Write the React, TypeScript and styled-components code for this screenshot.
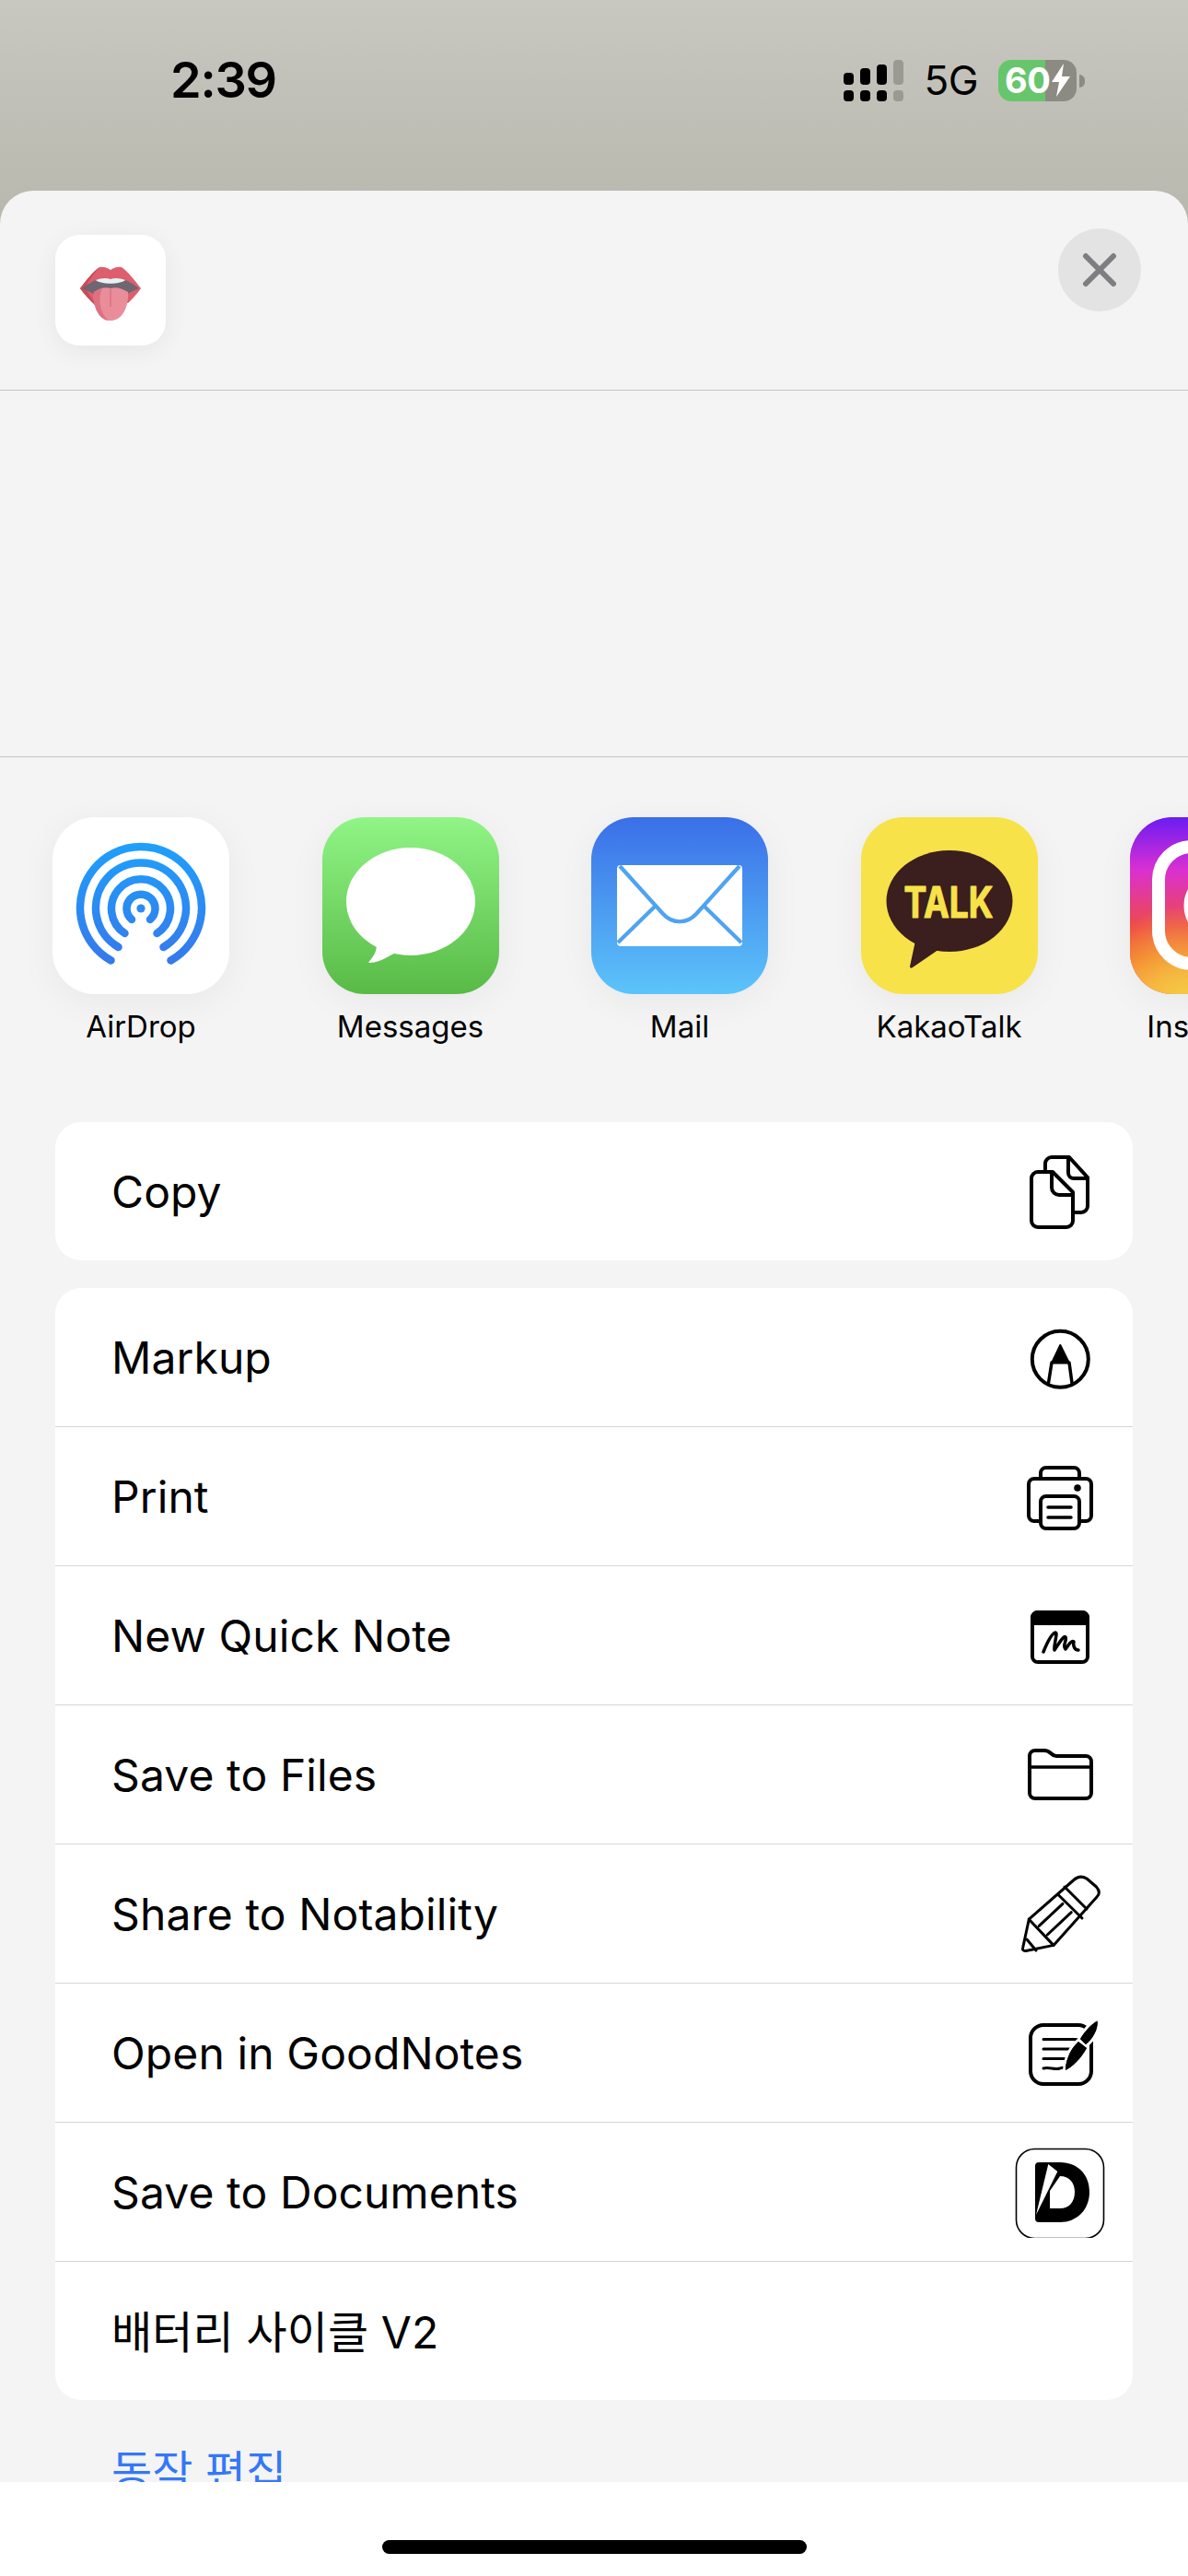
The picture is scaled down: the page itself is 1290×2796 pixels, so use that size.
import React from "react";
import styled, { createGlobalStyle } from "styled-components";

const GlobalStyle = createGlobalStyle`
  html, body {
    margin: 0;
    padding: 0;
    background: #fff;
  }
  * {
    box-sizing: border-box;
  }
`;

const FONT = `Inter, "Noto Sans CJK KR", "Liberation Sans", sans-serif`;

const Screen = styled.div`
  width: 1290px;
  height: 2796px;
  display: flex;
  flex-direction: column;
  overflow: hidden;
  font-family: ${FONT};
  color: #000;
  background: linear-gradient(180deg, #c8c7c0 0, #b8b8ae 240px);
`;

const StatusBar = styled.div`
  height: 207px;
  flex-shrink: 0;
  display: flex;
  justify-content: space-between;
  align-items: flex-start;
  padding: 60px 121px 0 185px;
`;
const Time = styled.div`
  font-size: 54px;
  line-height: 54px;
  font-weight: 600;
  letter-spacing: -1.2px;
`;
const StatusIcons = styled.div`
  display: flex;
  align-items: center;
  gap: 22px;
  height: 54px;
`;
const NetworkLabel = styled.div`
  font-size: 44px;
  line-height: 54px;
  font-weight: 400;
  letter-spacing: -0.5px;
`;
const Battery = styled.div`
  position: relative;
  width: 85px;
  height: 45px;
  border-radius: 14px;
  background: linear-gradient(90deg, #67c66b 60%, #8b8b84 60%);
  display: flex;
  align-items: center;
  padding-left: 7px;
  color: #fff;
  font-size: 38px;
  font-weight: 700;
  letter-spacing: -0.5px;
  &::after {
    content: "";
    position: absolute;
    right: -9px;
    top: 16px;
    width: 6px;
    height: 14px;
    border-radius: 0 7px 7px 0;
    background: #8b8b84;
  }
`;

const Sheet = styled.div`
  flex: 1;
  min-height: 0;
  overflow: hidden;
  background: #f4f4f4;
  border-radius: 36px 36px 0 0;
`;
const SheetHeader = styled.div`
  height: 217px;
  display: flex;
  justify-content: space-between;
  align-items: flex-start;
  padding: 0 51px 0 60px;
  border-bottom: 1px solid #c6c6c6;
`;
const Thumb = styled.div`
  width: 120px;
  height: 120px;
  margin-top: 48px;
  border-radius: 26px;
  background: #fff;
  box-shadow: 0 6px 28px rgba(0, 0, 0, 0.06);
`;
const CloseButton = styled.div`
  width: 90px;
  height: 90px;
  margin-top: 41px;
  border-radius: 50%;
  background: #e3e3e4;
  display: flex;
  align-items: center;
  justify-content: center;
`;
const PreviewArea = styled.div`
  height: 398px;
  border-bottom: 1px solid #c6c6c6;
`;
const AppsRow = styled.div`
  height: 396px;
  display: flex;
  gap: 100.5px;
  padding: 65px 0 0 57px;
  overflow: hidden;
`;
const AppItem = styled.div`
  width: 192px;
  flex-shrink: 0;
  display: flex;
  flex-direction: column;
  align-items: center;
`;
const AppIcon = styled.div<{ $bg: string }>`
  width: 192px;
  height: 192px;
  border-radius: 46px;
  overflow: hidden;
  background: ${(props) => props.$bg};
  box-shadow: 0 8px 40px rgba(0, 0, 0, 0.05);
`;
const AppLabel = styled.div`
  margin-top: 15px;
  font-size: 33px;
  line-height: 40px;
  white-space: nowrap;
`;
const Lists = styled.div`
  display: flex;
  flex-direction: column;
  gap: 30px;
  padding: 0 60px;
`;
const Card = styled.div`
  background: #fff;
  border-radius: 28px;
  overflow: hidden;
`;
const Row = styled.div`
  height: 151px;
  display: flex;
  align-items: center;
  justify-content: space-between;
  padding: 0 29px 0 61px;
  font-size: 48px;
  letter-spacing: 0.1px;
  & + & {
    border-top: 1px solid #d6d6d6;
  }
  &:first-child {
    height: 150px;
  }
  &:last-child:not(:first-child) {
    padding-bottom: 5px;
  }
`;
const EditActions = styled.div`
  margin: 50px 0 0 121px;
  font-size: 48px;
  line-height: 56px;
  color: #3478f6;
`;
const HomeArea = styled.div`
  height: 102px;
  flex-shrink: 0;
  background: #fff;
  display: flex;
  justify-content: center;
  padding-top: 63px;
`;
const HomeBar = styled.div`
  width: 461px;
  height: 15px;
  border-radius: 8px;
  background: #000;
`;
const RowIcon = styled.svg<{ $stroke?: number }>`
  width: 100px;
  height: 100px;
  flex-shrink: 0;
  fill: none;
  stroke: #000;
  stroke-width: ${(props) => props.$stroke ?? 4};
  stroke-linecap: round;
  stroke-linejoin: round;
`;
const IconArt = styled.svg`
  display: block;
  width: 100%;
  height: 100%;
`;

function SignalIcon() {
  return (
    <svg width="65" height="45" viewBox="0 0 65 45">
      <rect x="0" y="14" width="11" height="13" rx="4" />
      <rect x="18" y="9" width="11" height="18" rx="4" />
      <rect x="36" y="5" width="11" height="22" rx="4" />
      <rect x="54" y="0" width="11" height="27" rx="4" fill="#9a9a92" />
      <rect x="0" y="33" width="11" height="12" rx="4" />
      <rect x="18" y="33" width="11" height="12" rx="4" />
      <rect x="36" y="33" width="11" height="12" rx="4" />
      <rect x="54" y="33" width="11" height="12" rx="4" fill="#9a9a92" />
    </svg>
  );
}

function TongueArt() {
  return (
    <IconArt viewBox="0 0 120 120">
      <path d="M27 58 C33 50 41 40 48 35 C53 34 57 36 60 38 C63 36 67 34 72 35 C79 40 87 50 93 58 C89 64 83 70 79 74 L43 76 C37 70 31 64 27 58 Z" fill="#dd5f6d" />
      <path d="M27 58 C33 50 41 40 48 35 C42 42 36 50 33 57 C36 64 40 70 45 76 L43 76 C37 70 31 64 27 58 Z" fill="#c84b58" />
      <path d="M29 58 C38 52 42 49 46 49 C52 51 68 51 74 49 C79 49 84 53 91 58 C86 60 82 62 78 64 L42 64 C38 62 34 60 29 58 Z" fill="#6e6670" />
      <path d="M44 49 C49 47 55 46 60 48 C65 46 71 47 76 49 C70 54 50 54 44 49 Z" fill="#e6f2f5" />
      <path d="M42 62 C48 58 54 56 60 58 C66 56 72 58 79 62 C80 72 76 93 60 93 C46 93 40 74 42 62 Z" fill="#ea8d9a" />
      <path d="M42 62 C45 60 48 59 51 58 C47 66 47 84 58 93 C46 92 40 74 42 62 Z" fill="#dc7181" />
      <path d="M60 59 V78" stroke="#d8707f" strokeWidth="1.5" fill="none" />
    </IconArt>
  );
}

function AirDropArt() {
  return (
    <IconArt viewBox="0 0 192 192">
      <defs>
        <linearGradient id="airdropBlue" gradientUnits="userSpaceOnUse" x1="0" y1="29" x2="0" y2="160">
          <stop offset="0" stopColor="#1ea0fb" />
          <stop offset="1" stopColor="#3678ec" />
        </linearGradient>
      </defs>
      <path
        d="M63.5 155.5 A66 66 0 1 1 128.5 155.5 M71.5 141 A49 49 0 1 1 120.5 141 M78.5 126 A32 32 0 1 1 113.5 126 M86 111 A15.5 15.5 0 1 1 106 111"
        fill="none"
        stroke="url(#airdropBlue)"
        strokeWidth="8.5"
        strokeLinecap="round"
      />
      <circle cx="96" cy="99" r="4.6" fill="#2a8bf3" />
    </IconArt>
  );
}

function MessagesArt() {
  return (
    <IconArt viewBox="0 0 192 192">
      <ellipse cx="96" cy="91.5" rx="70" ry="58.5" fill="#fff" />
      <path d="M50 158 C54 152 61 146 58 136 L82 146 C72 150 64 158 50 158 Z" fill="#fff" />
    </IconArt>
  );
}

function MailArt() {
  return (
    <IconArt viewBox="0 0 192 192">
      <rect x="28" y="52" width="136" height="88" rx="4" fill="#fff" />
      <path
        d="M31 53 L78 105 C88 116 104 116 114 105 L161 53 M29 136 L70 96 M163 136 L122 96"
        fill="none"
        stroke="#4ea3f2"
        strokeWidth="4.2"
      />
    </IconArt>
  );
}

function KakaoArt() {
  return (
    <IconArt viewBox="0 0 192 192">
      <ellipse cx="96" cy="91" rx="68.5" ry="55" fill="#3b1e1e" />
      <path d="M59 134 L53 162 C53 164 55 164 56 163 L85 143 Z" fill="#3b1e1e" />
      <text
        x="95"
        y="108.5"
        textAnchor="middle"
        textLength="97"
        lengthAdjust="spacingAndGlyphs"
        fontFamily="Inter, sans-serif"
        fontWeight="700"
        fontSize="46"
        fill="#f7e24a"
        stroke="#f7e24a"
        strokeWidth="1.2"
        strokeLinejoin="round"
      >
        TALK
      </text>
    </IconArt>
  );
}

function InstagramArt() {
  return (
    <IconArt viewBox="0 0 192 192">
      <defs>
        <linearGradient id="instaBase" x1="0" y1="0" x2="0" y2="1">
          <stop offset="0" stopColor="#6a1cf2" />
          <stop offset="0.3" stopColor="#da30d2" />
          <stop offset="0.62" stopColor="#ee4a48" />
          <stop offset="0.8" stopColor="#f26e2a" />
          <stop offset="1" stopColor="#f5a53a" />
        </linearGradient>
        <radialGradient id="instaGlow" cx="0.3" cy="1" r="0.5">
          <stop offset="0" stopColor="#f6c844" />
          <stop offset="1" stopColor="#f6c844" stopOpacity="0" />
        </radialGradient>
      </defs>
      <rect width="192" height="192" fill="url(#instaBase)" />
      <rect width="192" height="192" fill="url(#instaGlow)" />
      <rect x="31" y="32" width="130" height="127" rx="36" fill="none" stroke="#fff" strokeWidth="14" />
      <circle cx="96" cy="96" r="31" fill="none" stroke="#fff" strokeWidth="13" />
    </IconArt>
  );
}

function CopyIcon() {
  return (
    <RowIcon viewBox="0 0 100 100">
      <path d="M34 27 V20 a7 7 0 0 1 7 -7 H60 L80 35 V66 a7 7 0 0 1 -7 7 H65" />
      <path d="M59 13 V30 a6 6 0 0 0 6 6 H80" />
      <path d="M42 29 H26 a7 7 0 0 0 -7 7 V82 a7 7 0 0 0 7 7 H57 a7 7 0 0 0 7 -7 V51 Z" />
      <path d="M41 29 V46 a8 8 0 0 0 8 8 H64" />
    </RowIcon>
  );
}

function MarkupIcon() {
  return (
    <RowIcon viewBox="0 0 100 100">
      <circle cx="50.3" cy="52.3" r="30.5" />
      <path d="M50.3 37 L41 56.5 H60 Z" fill="#000" strokeWidth="2" />
      <path d="M41 56 L37.5 78 M60 56 L63 78" strokeWidth="3.5" />
    </RowIcon>
  );
}

function PrintIcon() {
  return (
    <RowIcon viewBox="0 0 100 100">
      <path d="M28 77 H22 a6 6 0 0 1 -6 -6 V37 a6 6 0 0 1 6 -6 H78 a6 6 0 0 1 6 6 V71 a6 6 0 0 1 -6 6 H72" />
      <path d="M29 31 V25 a6 6 0 0 1 6 -6 H65 a6 6 0 0 1 6 6 V31" />
      <rect x="29" y="50" width="42" height="35" rx="6" />
      <path d="M37 62 H62 M37 73 H62" strokeWidth="3.5" />
      <circle cx="69" cy="41" r="3.8" fill="#000" stroke="none" />
    </RowIcon>
  );
}

function QuickNoteIcon() {
  return (
    <RowIcon viewBox="0 0 100 100">
      <rect x="20" y="25" width="60" height="54" rx="6" />
      <path d="M20 31 a6 6 0 0 1 6 -6 H74 a6 6 0 0 1 6 6 V37 H20 Z" fill="#000" />
      <path
        d="M32 68 C36 58 41 48 45 47 C48 47 43 60 44 66 C50 57 54 50 56 52 C58 55 52 62 56 65 C60 59 63 55 65 57 C64 62 66 66 70 66"
        strokeWidth="3.5"
      />
    </RowIcon>
  );
}

function FolderIcon() {
  return (
    <RowIcon viewBox="0 0 100 100">
      <path d="M17 70 V30 a6 6 0 0 1 6 -6 H33 c3 0 5 1 7 3 c2 2 3 3 6 3 H78 a6 6 0 0 1 6 6 V70 a6 6 0 0 1 -6 6 H23 a6 6 0 0 1 -6 -6 Z" />
      <path d="M17 42 H84" strokeWidth="3.5" />
    </RowIcon>
  );
}

function PencilIcon() {
  return (
    <RowIcon viewBox="0 0 100 100" $stroke={3}>
      <path d="M16.3 56.2 L65 13.5 C69 10 74 9 79 12 L89.5 21 C93 25 93 29 90 32 L43 84.4 L13 90.5 C10 91 9 89 9.7 87 Z" />
      <path d="M16.3 56.2 L43 84.4 M14 78 L24 90 M27.3 63.4 L53 39.4 M36.3 73 L62.3 48.7 M48.3 29.7 L74 55 M55 21 L79 45" />
    </RowIcon>
  );
}

function GoodNotesIcon() {
  return (
    <RowIcon viewBox="0 0 100 100">
      <rect x="18" y="20" width="66" height="64" rx="14" />
      <path d="M32 35.5 H68 M32 46 H61 M32 56.5 H57 M32 67 C38 65 44 69 50 67 C52 66 54 66 56 67" strokeWidth="3" />
      <path d="M90.5 15.5 C92 24 85 36 78 41 L72 35 C77 27 84 19 90.5 15.5 Z M70 38 L79 45 C73 56 63 66 56 69 C56 62 59 48 70 38 Z" fill="#000" stroke="#fff" strokeWidth="6" paintOrder="stroke" />
      <path d="M90.5 15.5 C92 24 85 36 78 41 L72 35 C77 27 84 19 90.5 15.5 Z M70 38 L79 45 C73 56 63 66 56 69 C56 62 59 48 70 38 Z" fill="#000" stroke="none" />
    </RowIcon>
  );
}

function DocumentsIcon() {
  return (
    <RowIcon viewBox="0 0 100 100" $stroke={1.6}>
      <rect x="2.5" y="3.5" width="95" height="97" rx="20" />
      <path
        d="M27 18 H50 C70 18 82 32 82 50 C82 70 68 83 50 83 H27 a4 4 0 0 1 -4 -4 V22 a4 4 0 0 1 4 -4 Z M39 68 V49 L50 33 C60 33 66 40 66 50 C66 61 60 68 50 68 Z"
        fill="#000"
        fillRule="evenodd"
        stroke="none"
      />
      <path d="M37.3 20 L47.3 28 L24 75 Z" fill="#fff" stroke="none" />
    </RowIcon>
  );
}

const apps = [
  { label: "AirDrop", bg: "#fff", art: <AirDropArt /> },
  { label: "Messages", bg: "linear-gradient(180deg, #90f586 0%, #59ba46 100%)", art: <MessagesArt /> },
  { label: "Mail", bg: "linear-gradient(180deg, #3a6fe8 0%, #5cc4fa 100%)", art: <MailArt /> },
  { label: "KakaoTalk", bg: "#f7e24a", art: <KakaoArt /> },
  { label: "Instagram", bg: "#da30d2", art: <InstagramArt /> },
];

const actions = [
  { label: "Markup", icon: <MarkupIcon /> },
  { label: "Print", icon: <PrintIcon /> },
  { label: "New Quick Note", icon: <QuickNoteIcon /> },
  { label: "Save to Files", icon: <FolderIcon /> },
  { label: "Share to Notability", icon: <PencilIcon /> },
  { label: "Open in GoodNotes", icon: <GoodNotesIcon /> },
  { label: "Save to Documents", icon: <DocumentsIcon /> },
  { label: "배터리 사이클 V2", icon: null },
];

export default function App() {
  return (
    <Screen>
      <GlobalStyle />
      <StatusBar>
        <Time>2:39</Time>
        <StatusIcons>
          <SignalIcon />
          <NetworkLabel>5G</NetworkLabel>
          <Battery>
            60
            <svg width="22" height="36" viewBox="0 0 22 36" style={{ marginLeft: 1 }}>
              <path d="M14 0 L1 20 H9 L6 36 L21 14 H12 Z" fill="#fff" />
            </svg>
          </Battery>
        </StatusIcons>
      </StatusBar>
      <Sheet>
        <SheetHeader>
          <Thumb>
            <TongueArt />
          </Thumb>
          <CloseButton>
            <svg width="38" height="38" viewBox="0 0 38 38">
              <path d="M4 4 L34 34 M34 4 L4 34" stroke="#7d7d82" strokeWidth="6" strokeLinecap="round" />
            </svg>
          </CloseButton>
        </SheetHeader>
        <PreviewArea />
        <AppsRow>
          {apps.map((app) => (
            <AppItem key={app.label}>
              <AppIcon $bg={app.bg}>{app.art}</AppIcon>
              <AppLabel>{app.label}</AppLabel>
            </AppItem>
          ))}
        </AppsRow>
        <Lists>
          <Card>
            <Row>
              Copy
              <CopyIcon />
            </Row>
          </Card>
          <Card>
            {actions.map((action) => (
              <Row key={action.label}>
                {action.label}
                {action.icon}
              </Row>
            ))}
          </Card>
        </Lists>
        <EditActions>동작 편집</EditActions>
      </Sheet>
      <HomeArea>
        <HomeBar />
      </HomeArea>
    </Screen>
  );
}
